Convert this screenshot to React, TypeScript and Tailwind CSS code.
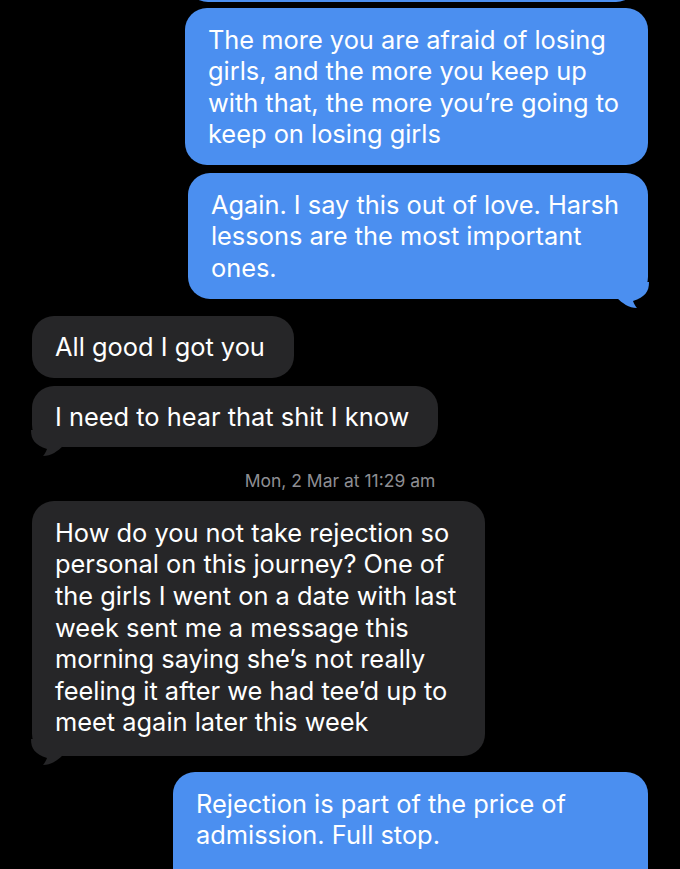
import React from "react";

type Side = "me" | "them";

const BLUE = "#4b8ff0";
const GRAY = "#262628";

const Tail = ({ side }: { side: Side }) =>
  side === "me" ? (
    <svg
      className="absolute -right-[1px] bottom-[-10px]"
      width="32"
      height="27"
      viewBox="0 0 32 27"
    >
      <path
        d="M0 16 L0 0 L32 0 C32 10 28 15 16 19 C17 22 19 25 20 26 C12 26 5 21 0 16 Z"
        fill={BLUE}
      />
    </svg>
  ) : (
    <svg
      className="absolute -left-[1px] bottom-[-10px]"
      width="32"
      height="27"
      viewBox="0 0 32 27"
    >
      <path
        d="M32 16 L32 0 L0 0 C0 10 4 15 16 19 C15 22 13 25 12 26 C20 26 27 21 32 16 Z"
        fill={GRAY}
      />
    </svg>
  );

const Bubble = ({
  side,
  lines,
  tail,
  className = "",
}: {
  side: Side;
  lines: string[];
  tail?: boolean;
  className?: string;
}) => (
  <div
    className={`relative rounded-[22px] pl-[23px] pr-[29px] py-[15.5px] text-white text-[25.4px] leading-[31.6px] ${
      side === "me" ? "self-end bg-[#4b8ff0]" : "self-start bg-[#262628]"
    } ${className}`}
  >
    {lines.map((l) => (
      <div key={l} className="whitespace-nowrap">
        {l}
      </div>
    ))}
    {tail && <Tail side={side} />}
  </div>
);

export default function App() {
  return (
    <div
      className="w-[680px] h-[869px] overflow-hidden bg-black flex flex-col px-[32px]"
      style={{ fontFamily: "Inter, 'Liberation Sans', sans-serif" }}
    >
      {/* end of earlier message, scrolled off */}
      <div className="self-end mr-[10px] w-[452px] h-[24px] -mt-[22px] rounded-b-[22px] bg-[#4b8ff0] shrink-0" />

      <Bubble
        side="me"
        className="w-fit mt-[6px]"
        lines={[
          "The more you are afraid of losing",
          "girls, and the more you keep up",
          "with that, the more you’re going to",
          "keep on losing girls",
        ]}
      />
      <Bubble
        side="me"
        tail
        className="w-fit mt-[8px]"
        lines={[
          "Again. I say this out of love. Harsh",
          "lessons are the most important",
          "ones.",
        ]}
      />

      <Bubble side="them" className="w-fit mt-[17px] py-[15px]" lines={["All good I got you"]} />
      <Bubble
        side="them"
        tail
        className="w-fit mt-[8px] py-[15px]"
        lines={["I need to hear that shit I know"]}
      />

      <div className="mt-[24px] text-center text-[17.5px] leading-[20px] text-[#8e8e93]">
        Mon, 2 Mar at 11:29 am
      </div>

      <Bubble
        side="them"
        tail
        className="w-fit mt-[10px] pb-[18px]"
        lines={[
          "How do you not take rejection so",
          "personal on this journey? One of",
          "the girls I went on a date with last",
          "week sent me a message this",
          "morning saying she’s not really",
          "feeling it after we had tee’d up to",
          "meet again later this week",
        ]}
      />

      <Bubble
        side="me"
        className="w-[475px] mt-[16px] pb-[60px]"
        lines={["Rejection is part of the price of", "admission. Full stop."]}
      />
    </div>
  );
}
